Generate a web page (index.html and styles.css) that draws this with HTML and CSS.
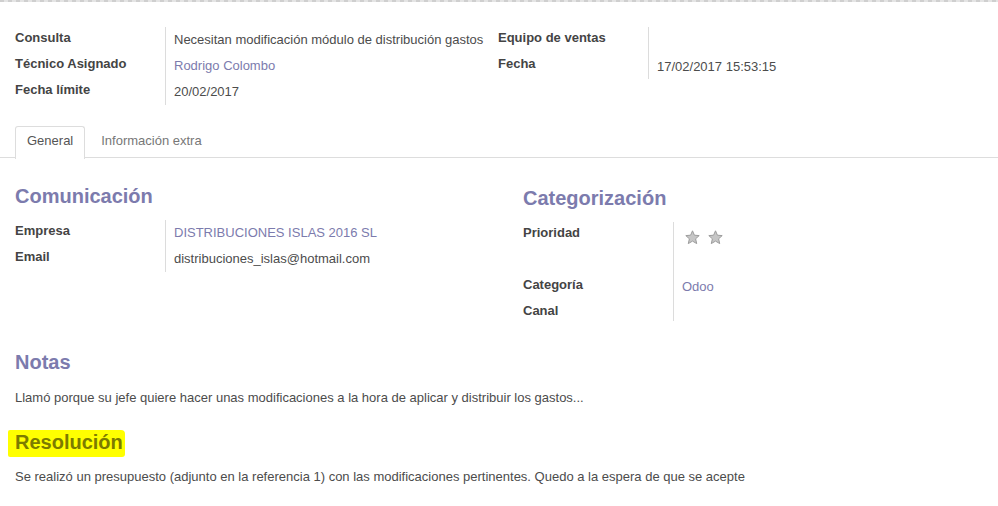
FILE: index.html
```html
<!DOCTYPE html>
<html lang="es">
<head>
<meta charset="utf-8">
<title>Consulta</title>
<link rel="stylesheet" href="styles.css">
</head>
<body>
<div class="topline"></div>
<div class="sheet">
  <div class="groups top">
    <div class="group g-top-left">
      <div class="lbl">Consulta</div><div class="val">Necesitan modificación módulo de distribución gastos</div>
      <div class="lbl">Técnico Asignado</div><div class="val"><a class="link">Rodrigo Colombo</a></div>
      <div class="lbl">Fecha límite</div><div class="val">20/02/2017</div>
    </div>
    <div class="group g-top-right">
      <div class="lbl">Equipo de ventas</div><div class="val"></div>
      <div class="lbl">Fecha</div><div class="val val-low">17/02/2017 15:53:15</div>
    </div>
  </div>

  <div class="tabs">
    <div class="tab active">General</div>
    <div class="tab">Información extra</div>
  </div>

  <div class="groups bottom">
    <div class="col col-left">
      <h2 class="sep">Comunicación</h2>
      <div class="group">
        <div class="lbl">Empresa</div><div class="val"><a class="link">DISTRIBUCIONES ISLAS 2016 SL</a></div>
        <div class="lbl">Email</div><div class="val">distribuciones_islas@hotmail.com</div>
      </div>
    </div>
    <div class="col col-right">
      <h2 class="sep">Categorización</h2>
      <div class="group g-cat">
        <div class="lbl">Prioridad</div>
        <div class="val stars">
          <svg class="star" width="15" height="15" viewBox="0 0 15 15"><polygon points="7.5,0.8 9.4,5.2 14.2,5.6 10.6,8.8 11.7,13.6 7.5,11.1 3.3,13.6 4.4,8.8 0.8,5.6 5.6,5.2"/></svg>
          <svg class="star" width="15" height="15" viewBox="0 0 15 15"><polygon points="7.5,0.8 9.4,5.2 14.2,5.6 10.6,8.8 11.7,13.6 7.5,11.1 3.3,13.6 4.4,8.8 0.8,5.6 5.6,5.2"/></svg>
        </div>
        <div class="lbl">Categoría</div><div class="val"><a class="link">Odoo</a></div>
        <div class="lbl">Canal</div><div class="val"></div>
      </div>
    </div>
  </div>

  <h2 class="sep notes-h">Notas</h2>
  <p class="text">Llamó porque su jefe quiere hacer unas modificaciones a la hora de aplicar y distribuir los gastos...</p>

  <h2 class="sep res-h"><span class="hl">Resolución</span></h2>
  <p class="text">Se realizó un presupuesto (adjunto en la referencia 1) con las modificaciones pertinentes. Quedo a la espera de que se acepte</p>
</div>
</body>
</html>
```

FILE: styles.css
```css
* { box-sizing: border-box; }
html, body {
  margin: 0;
  padding: 0;
  background: #ffffff;
}
body {
  font-family: "Liberation Sans", Arial, sans-serif;
  font-size: 13px;
  color: #4c4c4c;
  width: 998px;
  height: 506px;
  overflow: hidden;
}
.topline {
  height: 2px;
  background: repeating-linear-gradient(90deg, #cfcfcf 0 4px, #e4e4e4 4px 8px);
}
.groups {
  display: flex;
  padding-left: 15px;
}
.groups.top {
  margin-top: 25px;
}
.group {
  display: grid;
  grid-template-columns: 150px 1fr;
  grid-auto-rows: 26px;
}
.g-cat {
  grid-template-rows: 52px 26px 21px;
}
.g-top-left { width: 483px; }
.g-top-right { flex: 1; }
.lbl {
  font-weight: bold;
  color: #444444;
  line-height: 20px;
  padding-top: 1px;
  white-space: nowrap;
}
.val {
  border-left: 1px solid #dcdcdc;
  padding-left: 8px;
  padding-top: 3px;
  line-height: 20px;
  white-space: nowrap;
}
.val-low { padding-top: 4px; }
.link {
  color: #7c7bad;
  text-decoration: none;
}

.tabs {
  display: flex;
  gap: 4px;
  margin-top: 21px;
  padding-left: 15px;
  border-bottom: 1px solid #dddddd;
  height: 32px;
}
.tab {
  padding: 4px 11px 7px;
  line-height: 20px;
  border: 1px solid transparent;
  border-bottom: none;
  color: #777777;
  height: 32px;
}
.tab.active {
  border-color: #dddddd;
  border-radius: 3px 3px 0 0;
  background: #ffffff;
  color: #555555;
  height: 33px;
}

h2.sep {
  margin: 0 0 12px 0;
  font-size: 20px;
  line-height: 24px;
  height: 24px;
  font-weight: bold;
  color: #7c7bad;
}
.groups.bottom {
  margin-top: 26px;
}
.col-left { width: 508px; }
.col-right { flex: 1; padding-top: 2px; }
.stars {
  padding-left: 11px;
  padding-top: 8px;
  display: flex;
  align-items: flex-start;
  gap: 8px;
}
.star polygon {
  fill: #c6c6c6;
  stroke: #9c9c9c;
  stroke-width: 1;
  stroke-linejoin: round;
}
h2.notes-h {
  margin-top: 29px;
  margin-bottom: 14px;
  padding-left: 15px;
}
h2.res-h {
  margin-top: 22px;
  margin-bottom: 13px;
  padding-left: 15px;
}
.hl {
  display: inline-block;
  vertical-align: top;
  background: #ffff00;
  color: #7c7b00;
  margin-left: -7px;
  padding: 0 2px 0 7px;
  height: 27px;
  line-height: 24px;
  border-radius: 2px 4px 3px 2px;
}
.text {
  margin: 0;
  padding-left: 15px;
  line-height: 20px;
  white-space: nowrap;
}
```
